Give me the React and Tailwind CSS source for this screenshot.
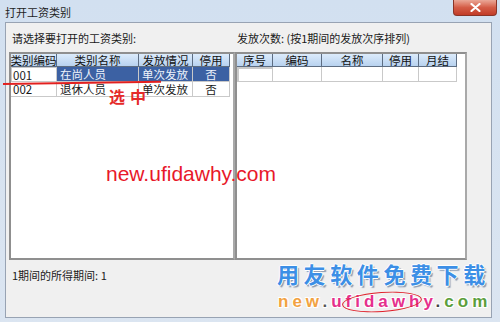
export default function App() {
  const font = "font-['Noto_Sans_CJK_SC','Liberation_Sans',sans-serif]";
  const head =
    "h-[13px] shrink-0 bg-gradient-to-b from-[#dcebfb] to-[#b8d2ef] border-r border-b border-[#5d6d82] flex items-center justify-center text-[11.5px] leading-[13px] text-[#111] whitespace-nowrap";
  const cell = "h-[15px] shrink-0 border-r border-b border-[#c9c9c9] flex items-center text-[11.5px] leading-[14px] whitespace-nowrap";
  const sel = "bg-[#3c61a3] text-[#eef3fb]";
  return (
    <div className={`w-[500px] h-[322px] relative overflow-hidden bg-gradient-to-b from-[#d2e0f0] to-[#dbe5f1] ${font} text-[#1a1a1a] flex flex-col`}>
      {/* title bar */}
      <div className="h-[22px] shrink-0 flex items-start justify-between">
        <div className="pl-[5px] pt-[5px] text-[11px] leading-[14px] text-[#1e1e1e]">打开工资类别</div>
        <div className="mr-[3px] w-[44px] h-[16px] rounded-b-[4px] border border-t-0 border-[#8a3427] bg-gradient-to-b from-[#eaa797] via-[#d45c46] to-[#c13b27] flex items-center justify-center">
          <svg width="11" height="9" viewBox="0 0 11 9">
            <path d="M1.5 1 L9.5 8 M9.5 1 L1.5 8" stroke="#fff" strokeWidth="2.2" strokeLinecap="round" />
          </svg>
        </div>
      </div>

      {/* dialog body */}
      <div className="ml-[5px] mr-[8px] mb-[4px] flex-1 border border-[#98a3b3] bg-[#f0f0f0] flex flex-col">
        <div className="h-[29px] shrink-0 flex text-[11px] leading-[14px]">
          <div className="w-[229px] pl-[6px] pt-[8px]">请选择要打开的工资类别:</div>
          <div className="pl-[2px] pt-[8px]">发放次数: (按1期间的发放次序排列)</div>
        </div>

        <div className="h-[208px] shrink-0 flex pl-[3px]">
          {/* left grid */}
          <div className="w-[226px] border-2 border-[#8f8f8f] border-r-[#a9a9a9] bg-white flex flex-col">
            <div className="flex">
              <div className={`${head} w-[46px]`}>类别编码</div>
              <div className={`${head} w-[82px]`}>类别名称</div>
              <div className={`${head} w-[54px]`}>发放情况</div>
              <div className={`${head} w-[37px]`}>停用</div>
            </div>
            <div className="flex">
              <div className={`${cell} w-[46px] border border-[#5a5a5a] pl-[1px]`}>001</div>
              <div className={`${cell} w-[82px] ${sel} pl-[3px]`}>在尚人员</div>
              <div className={`${cell} w-[54px] ${sel} pl-[3px]`}>单次发放</div>
              <div className={`${cell} w-[37px] ${sel} justify-center`}>否</div>
            </div>
            <div className="flex">
              <div className={`${cell} w-[46px] pl-[2px]`}>002</div>
              <div className={`${cell} w-[82px] pl-[3px]`}>退休人员</div>
              <div className={`${cell} w-[54px] pl-[3px]`}>单次发放</div>
              <div className={`${cell} w-[37px] justify-center`}>否</div>
            </div>
          </div>

          {/* right grid */}
          <div className="w-[232px] border-2 border-[#8f8f8f] border-r-[#a9a9a9] bg-white flex flex-col">
            <div className="flex">
              <div className={`${head} w-[36px]`}>序号</div>
              <div className={`${head} w-[49px]`}>编码</div>
              <div className={`${head} w-[61px]`}>名称</div>
              <div className={`${head} w-[36px]`}>停用</div>
              <div className={`${head} w-[38px]`}>月结</div>
            </div>
            <div className="flex">
              <div className={`${cell} w-[36px] border-2 border-[#555]`}></div>
              <div className={`${cell} w-[49px]`}></div>
              <div className={`${cell} w-[61px]`}></div>
              <div className={`${cell} w-[36px]`}></div>
              <div className={`${cell} w-[38px]`}></div>
            </div>
          </div>
        </div>

        <div className="pl-[6px] pt-[8px] text-[11px] leading-[14px]">1期间的所得期间: 1</div>
      </div>

      {/* watermark overlays */}
      <div className="absolute left-[3px] top-[83px] w-[158px] h-[2px] bg-[#e2201f] -rotate-[0.8deg] origin-left"></div>
      <div className="absolute left-[109px] top-[86px] text-[16px] leading-[20px] font-bold text-[#e52a2a] tracking-[5px] font-['Noto_Sans_CJK_SC',serif]">选中</div>
      <div className="absolute left-[106px] top-[163px] text-[21px] leading-none text-[#e8182a] font-['Liberation_Sans',sans-serif]">new.ufidawhy.com</div>

      <div className="absolute left-[277px] top-[259px] text-[22px] leading-[28px] font-bold tracking-[4.6px] text-[#3c8fe6] font-['Noto_Sans_CJK_SC',sans-serif] [text-shadow:1px_0_0_#fff,-1px_0_0_#fff,0_1px_0_#fff,0_-1px_0_#fff,2px_2px_1px_#8a9ab0]">用友软件免费下载</div>
      <div className="absolute left-[278px] top-[292px] text-[17px] leading-[20px] font-bold tracking-[4px] font-['Liberation_Sans',sans-serif] [text-shadow:1px_1px_0_#fff,-1px_-1px_0_#fff,1px_-1px_0_#fff,-1px_1px_0_#fff]">
        <span className="text-[#f2a242]">new</span>
        <span className="text-[#555]">.</span>
        <span className="text-[#e5308c]">ufidawhy</span>
        <span className="text-[#444]">.</span>
        <span className="text-[#5c9e3c]">com</span>
      </div>
      <div className="absolute left-[342px] top-[292px] w-[80px] h-[20px] rounded-[50%] border-[1.5px] border-[#e0202a] -rotate-[4deg]"></div>
    </div>
  );
}
